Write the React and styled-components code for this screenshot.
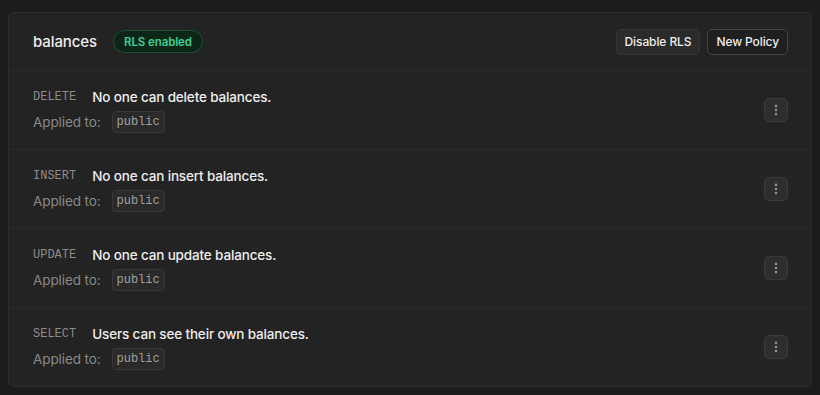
import { createGlobalStyle, styled } from "styled-components";
import { EllipsisVertical } from "lucide-react";

const policies = [
  { command: "DELETE", name: "No one can delete balances.", role: "public" },
  { command: "INSERT", name: "No one can insert balances.", role: "public" },
  { command: "UPDATE", name: "No one can update balances.", role: "public" },
  { command: "SELECT", name: "Users can see their own balances.", role: "public" },
];

const PolicyRow = ({ policy }) => {
  return (
    <Row>
      <RowInfo>
        <TitleLine>
          <Command>{policy.command}</Command>
          <PolicyName>{policy.name}</PolicyName>
        </TitleLine>
        <AppliedLine>
          <AppliedLabel>Applied to:</AppliedLabel>
          <RoleChip>{policy.role}</RoleChip>
        </AppliedLine>
      </RowInfo>
      <MenuButton aria-label="More">
        <EllipsisVertical size={14} strokeWidth={2.5} />
      </MenuButton>
    </Row>
  );
};

const App = () => {
  return (
    <>
      <GlobalStyle />
      <Page>
        <Card>
          <Header>
            <HeaderLeft>
              <TableName>balances</TableName>
              <Badge>RLS enabled</Badge>
            </HeaderLeft>
            <HeaderActions>
              <Button>Disable RLS</Button>
              <Button $outline>New Policy</Button>
            </HeaderActions>
          </Header>
          {policies.map((policy) => (
            <PolicyRow key={policy.command} policy={policy} />
          ))}
        </Card>
      </Page>
    </>
  );
};

export default App;

const GlobalStyle = createGlobalStyle`
  * {
    box-sizing: border-box;
  }
  body {
    margin: 0;
    background: #1c1c1c;
    font-family: Inter, "Noto Sans", sans-serif;
    color: #ededed;
  }
`;

const Page = styled.div`
  min-height: 395px;
  padding: 12px 8px 9px;
`;

const Card = styled.div`
  background: #232323;
  border: 1px solid #2e2e2e;
  border-radius: 6px;
  overflow: hidden;
`;

const Header = styled.div`
  height: 57px;
  padding: 0 23px 0 24px;
  display: flex;
  align-items: center;
  justify-content: space-between;
`;

const HeaderLeft = styled.div`
  display: flex;
  align-items: center;
  gap: 16px;
`;

const TableName = styled.h2`
  margin: 0;
  font-size: 15px;
  font-weight: 500;
  color: #ededed;
  letter-spacing: -0.1px;
`;

const Badge = styled.span`
  height: 23px;
  padding: 0 10px;
  display: inline-flex;
  align-items: center;
  border-radius: 12px;
  background: #0d2618;
  border: 1px solid #1d5236;
  color: #3ecf8e;
  font-size: 11.5px;
  font-weight: 600;
  letter-spacing: -0.1px;
`;

const HeaderActions = styled.div`
  display: flex;
  gap: 7px;
`;

const Button = styled.button`
  height: 26px;
  padding: 0 8px;
  border-radius: 5px;
  font-family: inherit;
  font-size: 12px;
  font-weight: 500;
  letter-spacing: -0.1px;
  color: #ededed;
  background: ${(p) => (p.$outline ? "#1f1f1f" : "#2b2b2b")};
  border: 1px solid ${(p) => (p.$outline ? "#454545" : "#363636")};
  cursor: pointer;
`;

const Row = styled.div`
  height: 79px;
  padding: 0 23px 0 24px;
  border-top: 1px solid #2b2b2b;
  display: flex;
  align-items: center;
  justify-content: space-between;
`;

const RowInfo = styled.div`
  display: flex;
  flex-direction: column;
  gap: 6px;
  padding-top: 2px;
`;

const TitleLine = styled.div`
  display: flex;
  align-items: center;
  gap: 16px;
`;

const Command = styled.span`
  font-family: "Liberation Mono", "DejaVu Sans Mono", monospace;
  font-size: 12px;
  color: #8b8b8b;
`;

const PolicyName = styled.span`
  font-size: 13.5px;
  font-weight: 500;
  letter-spacing: -0.15px;
  color: #ededed;
`;

const AppliedLine = styled.div`
  display: flex;
  align-items: center;
  gap: 11px;
`;

const AppliedLabel = styled.span`
  font-size: 13.5px;
  letter-spacing: -0.1px;
  color: #898989;
`;

const RoleChip = styled.code`
  height: 22px;
  padding: 0 4px;
  display: inline-flex;
  align-items: center;
  background: #2a2a2a;
  border: 1px solid #383838;
  border-radius: 4px;
  font-family: "Liberation Mono", "DejaVu Sans Mono", monospace;
  font-size: 12px;
  color: #a0a0a0;
`;

const MenuButton = styled.button`
  width: 24px;
  height: 24px;
  padding: 0;
  display: flex;
  align-items: center;
  justify-content: center;
  background: #2e2e2e;
  border: 1px solid #3a3a3a;
  border-radius: 5px;
  color: #8f8f8f;
  cursor: pointer;
`;
